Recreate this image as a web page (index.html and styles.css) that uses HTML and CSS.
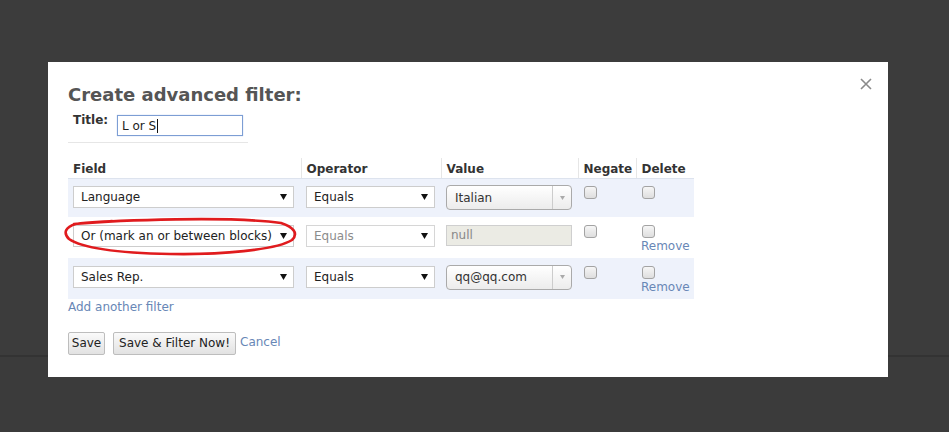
FILE: index.html
```html
<!DOCTYPE html>
<html>
<head>
<meta charset="utf-8">
<link rel="stylesheet" href="styles.css">
</head>
<body>
<div class="topband"></div>
<div class="modal">
  <span class="close"><svg width="12" height="12" viewBox="0 0 12 12"><path d="M1 1L11 11M11 1L1 11" stroke="#8a8a8a" stroke-width="1.6" fill="none"/></svg></span>
  <h2 class="heading">Create advanced filter:</h2>
  <div class="title-row">
    <label class="title-label">Title:</label>
    <span class="title-input">L or S<span class="caret"></span></span>
  </div>
  <table class="filters">
    <colgroup><col class="c1"><col class="c2"><col class="c3"><col class="c4"><col class="c5"></colgroup>
    <thead>
      <tr><th>Field</th><th>Operator</th><th>Value</th><th>Negate</th><th>Delete</th></tr>
    </thead>
    <tbody>
      <tr class="alt r1">
        <td><span class="sel w-field">Language<svg class="arr" width="7" height="6" viewBox="0 0 7 6"><path d="M0 0H7L3.5 6Z" fill="#111"/></svg></span></td>
        <td><span class="sel w-op">Equals<svg class="arr" width="7" height="6" viewBox="0 0 7 6"><path d="M0 0H7L3.5 6Z" fill="#111"/></svg></span></td>
        <td><span class="combo"><span class="combo-text">Italian</span><span class="combo-btn"><svg width="5" height="4" viewBox="0 0 5 4"><path d="M0 0H5L2.5 4Z" fill="#aaa"/></svg></span></span></td>
        <td><span class="cb"></span></td>
        <td><span class="cb"></span></td>
      </tr>
      <tr class="r2">
        <td><span class="sel w-field">Or (mark an or between blocks)<svg class="arr" width="7" height="6" viewBox="0 0 7 6"><path d="M0 0H7L3.5 6Z" fill="#111"/></svg></span></td>
        <td><span class="sel w-op dis">Equals<svg class="arr" width="7" height="6" viewBox="0 0 7 6"><path d="M0 0H7L3.5 6Z" fill="#111"/></svg></span></td>
        <td><span class="nullbox">null</span></td>
        <td><span class="cb"></span></td>
        <td><span class="cb"></span><a class="remove">Remove</a></td>
      </tr>
      <tr class="alt r3">
        <td><span class="sel w-field">Sales Rep.<svg class="arr" width="7" height="6" viewBox="0 0 7 6"><path d="M0 0H7L3.5 6Z" fill="#111"/></svg></span></td>
        <td><span class="sel w-op">Equals<svg class="arr" width="7" height="6" viewBox="0 0 7 6"><path d="M0 0H7L3.5 6Z" fill="#111"/></svg></span></td>
        <td><span class="combo"><span class="combo-text">qq@qq.com</span><span class="combo-btn"><svg width="5" height="4" viewBox="0 0 5 4"><path d="M0 0H5L2.5 4Z" fill="#aaa"/></svg></span></span></td>
        <td><span class="cb"></span></td>
        <td><span class="cb"></span><a class="remove">Remove</a></td>
      </tr>
    </tbody>
  </table>
  <a class="add">Add another filter</a>
  <div class="actions">
    <span class="btn b-save">Save</span>
    <span class="btn b-filter">Save &amp; Filter Now!</span>
    <a class="cancel">Cancel</a>
  </div>
</div>
<svg class="annot" width="949" height="432" viewBox="0 0 949 432">
  <path d="M74 224 C120 220, 230 216, 281 223 C293 227, 299 233, 292 240 C276 250, 220 255, 170 254 C120 253, 82 248, 69 239 C63 233, 65 227, 76 224 C88 222, 100 222, 112 221" fill="none" stroke="#e01b1e" stroke-width="2.6" stroke-linecap="round"/>
</svg>
</body>
</html>
```
FILE: styles.css
```css
body {
  margin: 0;
  background: #3b3b3b;
  font-family: "DejaVu Sans", Verdana, sans-serif;
  height: 432px;
  overflow: hidden;
}
.topband {
  height: 355px;
  background: #3c3c3c;
  border-bottom: 2px solid #333333;
}
.modal {
  position: absolute;
  left: 48px;
  top: 62px;
  width: 840px;
  height: 315px;
  background: #ffffff;
  box-sizing: border-box;
  padding: 22px 20px 0;
}
.close {
  position: absolute;
  right: 16px;
  top: 16px;
  width: 12px;
  height: 12px;
  display: block;
}
.close svg { display: block; }
.heading {
  margin: 0;
  font-size: 18px;
  line-height: 21px;
  font-weight: bold;
  color: #555555;
}
.title-row {
  display: flex;
  align-items: flex-start;
  width: 180px;
  margin-top: 10px;
  padding-bottom: 6px;
  border-bottom: 1px solid #e6e6e6;
}
.title-label {
  width: 44px;
  padding-left: 5px;
  margin-top: -2px;
  font-size: 12px;
  line-height: 15px;
  font-weight: bold;
  color: #333333;
}
.title-input {
  display: flex;
  align-items: center;
  width: 126px;
  height: 21px;
  box-sizing: border-box;
  border: 1px solid #7d9ed4;
  box-shadow: 0 0 1px #a9c2ea;
  padding: 0 4px;
  font-size: 12px;
  color: #222222;
}
.caret {
  display: inline-block;
  width: 1px;
  height: 14px;
  background: #111;
  margin-left: 1px;
}
.filters {
  margin-top: 15px;
  border-collapse: collapse;
  table-layout: fixed;
  width: 626px;
}
.c1 { width: 233px; }
.c2 { width: 140px; }
.c3 { width: 137px; }
.c4 { width: 58px; }
.c5 { width: 58px; }
.filters th {
  height: 19px;
  padding: 1px 5px 0;
  text-align: left;
  font-size: 12px;
  font-weight: bold;
  color: #333333;
  border-bottom: 1px solid #dde3ee;
  border-left: 1px solid #e6e6e6;
}
.filters th:first-child { border-left: none; }
.filters td {
  vertical-align: top;
  padding: 7px 5px 0;
  box-sizing: border-box;
}
.filters td:nth-child(4),
.filters td:nth-child(5) { padding-left: 6px; }
.r1 td { height: 38px; }
.r2 td, .r3 td { height: 41px; padding-top: 8px; }
.alt td { background: #eef2fb; }
.sel {
  display: flex;
  align-items: center;
  justify-content: space-between;
  height: 22px;
  box-sizing: border-box;
  border: 1px solid #cdcdcd;
  background: #ffffff;
  padding: 0 6px 0 7px;
  font-size: 12px;
  color: #222222;
}
.sel.dis { color: #8c8c8c; border-color: #d6d6d6; }
.w-field { width: 221px; }
.w-op { width: 129px; }
.arr { display: block; flex: none; }
.combo {
  display: flex;
  width: 126px;
  height: 25px;
  margin-top: -1px;
  box-sizing: border-box;
  border: 1px solid #aaaaaa;
  border-radius: 4px;
  background: linear-gradient(#ffffff, #ececec);
  font-size: 12px;
  color: #333333;
}
.combo-text {
  flex: 1;
  display: flex;
  align-items: center;
  padding-left: 8px;
}
.combo-btn {
  width: 18px;
  display: flex;
  align-items: center;
  justify-content: center;
  border-left: 1px solid #cccccc;
}
.combo-btn svg { display: block; }
.nullbox {
  display: flex;
  align-items: center;
  width: 126px;
  height: 21px;
  box-sizing: border-box;
  border: 1px solid #cfcfcf;
  background: #ebebe4;
  padding-left: 4px;
  font-size: 12px;
  color: #888888;
}
.cb {
  display: block;
  width: 13px;
  height: 13px;
  box-sizing: border-box;
  border: 1px solid #a3a3a3;
  border-radius: 3px;
  background: linear-gradient(#f6f6f6, #dedede);
}
.remove {
  display: block;
  margin-top: 1px;
  margin-left: -1px;
  font-size: 12px;
  line-height: 15px;
  color: #6887b6;
}
.add {
  display: block;
  margin-top: 1px;
  font-size: 12px;
  line-height: 15px;
  color: #6887b6;
}
.actions {
  display: flex;
  align-items: center;
  margin-top: 17px;
}
.btn {
  display: flex;
  align-items: center;
  justify-content: center;
  height: 23px;
  box-sizing: border-box;
  border: 1px solid #bdbdbd;
  border-radius: 2px;
  background: linear-gradient(#fafafa, #e2e2e2);
  font-size: 12px;
  color: #222222;
}
.b-save { width: 37px; }
.b-filter { width: 123px; margin-left: 8px; }
.cancel {
  margin-left: 4px;
  margin-bottom: 3px;
  font-size: 12px;
  color: #6887b6;
}
.annot {
  position: absolute;
  left: 0;
  top: 0;
  pointer-events: none;
}
```
